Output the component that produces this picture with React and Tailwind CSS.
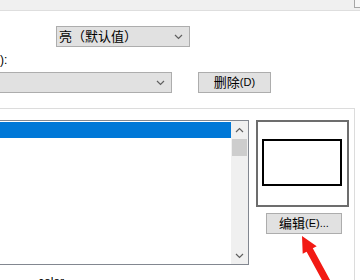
import React from "react";

function Chevron({ up = false, className = "" }) {
  return (
    <svg width="9" height="6" viewBox="0 0 9 6" className={className}>
      <path
        d={up ? "M1 5 L4.5 1.5 L8 5" : "M1 1 L4.5 4.5 L8 1"}
        fill="none"
        stroke="#606060"
        strokeWidth="1.2"
      />
    </svg>
  );
}

function Select({ label, className = "" }) {
  return (
    <div
      className={`flex h-[21px] items-center justify-between border border-[#adadad] bg-[#e1e1e1] pl-[2px] pr-[6px] text-[13px] text-black ${className}`}
    >
      <span className="leading-none">{label}</span>
      <Chevron />
    </div>
  );
}

function Button({ children, className = "" }) {
  return (
    <div
      className={`flex h-[21px] items-center justify-center border border-[#adadad] bg-[#e1e1e1] text-[13px] leading-none text-black ${className}`}
    >
      {children}
    </div>
  );
}

export default function App() {
  return (
    <div className="relative h-[280px] w-[360px] overflow-hidden bg-white font-['Liberation_Sans','Noto_Sans_CJK_SC',sans-serif] text-black">
      <div className="flex h-[11px] justify-end border-b border-[#dedede] bg-[#f0f0f0]">
        <div className="h-[8px] w-[6px] border-b border-l border-[#a6a6a6] bg-[#f7f7f7]" />
      </div>

      <Select label="亮（默认值）" className="ml-[56px] mt-[15px] w-[134px]" />

      <div className="mt-[6px] h-[14px] text-[12px] leading-[14px]">):</div>

      <div className="mt-[5px] flex items-start">
        <Select label="" className="w-[172px] border-l-0" />
        <Button className="ml-[26px] w-[73px]">
          删除<span className="text-[11px]">(D)</span>
        </Button>
      </div>

      <div className="mt-[15px] h-[200px] w-[355px] border-r border-t border-[#dcdcdc] pt-[11px]">
        <div className="flex items-start">
          <div className="flex h-[145px] w-[249px] border-b border-r border-t border-[#828790]">
            <div className="w-[231px] pt-px">
              <div className="h-[16px] bg-[#0078d7]" />
            </div>
            <div className="flex w-[17px] flex-col bg-[#f0f0f0]">
              <div className="flex h-[17px] items-center justify-center">
                <Chevron up />
              </div>
              <div className="mx-px mt-px h-[17px] bg-[#cdcdcd]" />
              <div className="flex-1" />
              <div className="flex h-[17px] items-center justify-center">
                <Chevron />
              </div>
            </div>
          </div>

          <div className="ml-[7px] flex flex-col">
            <div className="h-[87px] w-[93px] border-2 border-[#6d6d6d] pl-[4px] pt-[17px]">
              <div className="h-[47px] w-[80px] border-2 border-black" />
            </div>
            <Button className="ml-[10px] mt-[6px] h-[20px] w-[76px]">
              编辑<span className="text-[11px]">(E)...</span>
            </Button>
          </div>
        </div>

        <div className="ml-[38px] mt-[10px] text-[12px] leading-[14px]">color</div>
      </div>

      <svg
        className="pointer-events-none absolute left-0 top-0"
        width="360"
        height="280"
        viewBox="0 0 360 280"
      >
        <polygon
          points="302,236 316.7,246.2 312.8,248.3 333.9,287.1 327.7,290.5 306.6,251.7 302.7,253.8"
          fill="#f21a14"
        />
      </svg>
    </div>
  );
}
